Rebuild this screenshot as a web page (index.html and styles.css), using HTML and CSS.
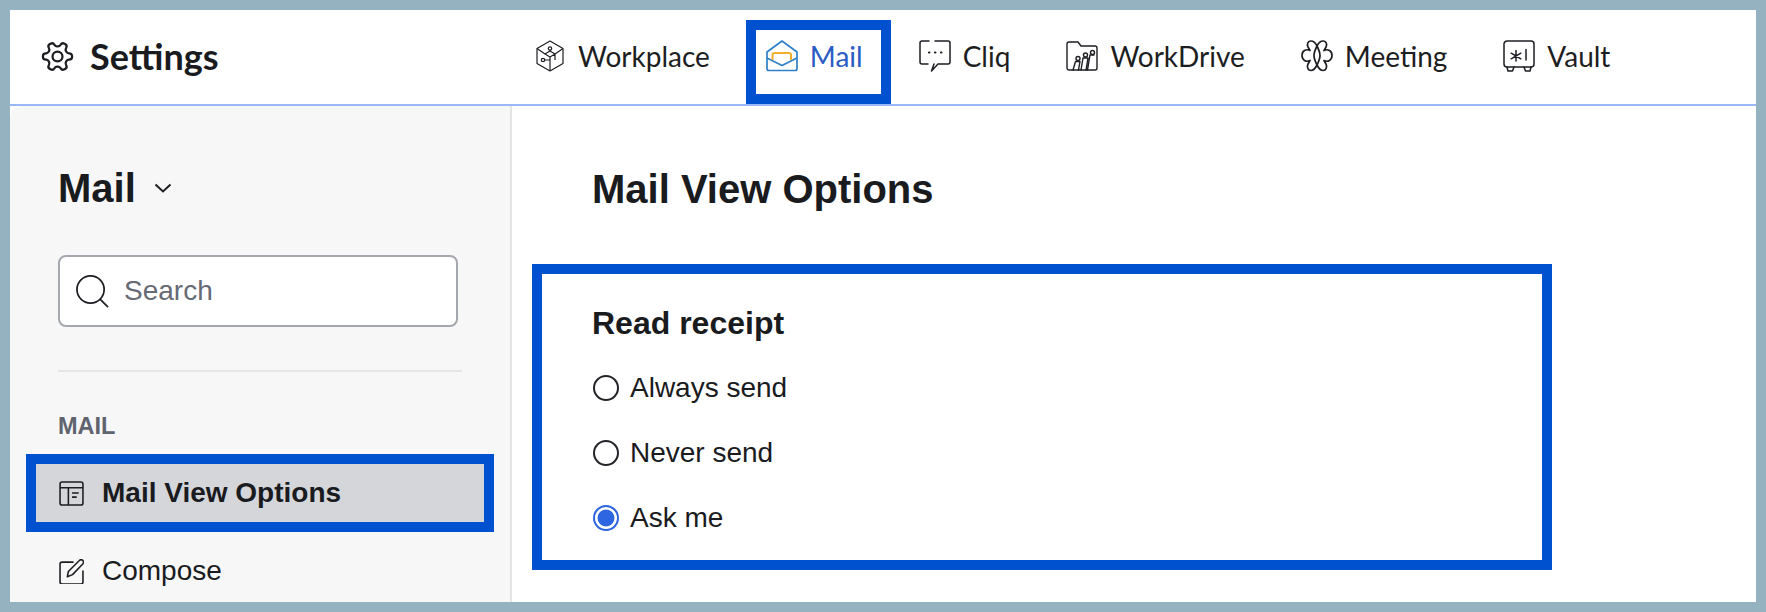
FILE: index.html
```html
<!DOCTYPE html>
<html lang="en">
<head>
<meta charset="utf-8">
<title>Mail View Options</title>
<link rel="stylesheet" href="styles.css">
</head>
<body>
<div class="frame">
  <header class="topbar">
    <div class="brand">
      <svg class="gear" viewBox="0 0 24 24" fill="none" stroke="#1d1e22" stroke-width="1.55" stroke-linejoin="round">
        <g transform="rotate(90 12 12)"><path d="M12.22 2h-.44a2 2 0 0 0-2 2v.18a2 2 0 0 1-1 1.73l-.43.25a2 2 0 0 1-2 0l-.15-.08a2 2 0 0 0-2.73.73l-.22.38a2 2 0 0 0 .73 2.73l.15.1a2 2 0 0 1 1 1.72v.51a2 2 0 0 1-1 1.74l-.15.09a2 2 0 0 0-.73 2.73l.22.38a2 2 0 0 0 2.73.73l.15-.08a2 2 0 0 1 2 0l.43.25a2 2 0 0 1 1 1.73V20a2 2 0 0 0 2 2h.44a2 2 0 0 0 2-2v-.18a2 2 0 0 1 1-1.73l.43-.25a2 2 0 0 1 2 0l.15.08a2 2 0 0 0 2.73-.73l.22-.39a2 2 0 0 0-.73-2.73l-.15-.08a2 2 0 0 1-1-1.74v-.5a2 2 0 0 1 1-1.74l.15-.09a2 2 0 0 0 .73-2.73l-.22-.38a2 2 0 0 0-2.73-.73l-.15.08a2 2 0 0 1-2 0l-.43-.25a2 2 0 0 1-1-1.73V4a2 2 0 0 0-2-2z"/><circle cx="12" cy="12" r="3.4"/></g>
      </svg>
      <span class="brand-name">Settings</span>
    </div>
    <nav class="apps">
      <a class="app">
        <svg class="app-icon workplace" viewBox="0 0 28 32" fill="none" stroke="#1d1e22" stroke-width="1.2" stroke-linejoin="round">
          <path d="M14 1 27 8.500V23.500L14 31 1 23.500V8.500Z"/>
          <path d="M1 8.500 9 14M27 8.500 19 14M14 11 19 14 14 17 9 14ZM19 14V20M14 17V31M14 10V11M8.500 20 14 20"/>
          <circle cx="14" cy="8.500" r="1.700"/>
          <circle cx="7" cy="20" r="1.700"/>
        </svg>
        <span>Workplace</span>
      </a>
      <a class="app active">
        <svg class="app-icon mail-icon" viewBox="0 0 32 32" fill="none" stroke-width="1.700" stroke-linejoin="round">
          <path d="M1 12 16 1 31 12V28.500A2 2 0 0 1 29 30.500H3A2 2 0 0 1 1 28.500Z" stroke="#2f80c8"/>
          <path d="M1 18 16 25.500 31 18" stroke="#2f80c8"/>
          <path d="M6.500 20V15A2 2 0 0 1 8.500 13H23A2 2 0 0 1 25 15V20" stroke="#f5ad2e" stroke-width="2"/>
        </svg>
        <span>Mail</span>
      </a>
      <a class="app">
        <svg class="app-icon" viewBox="0 0 32 32" fill="none" stroke="#1d1e22" stroke-width="1.500" stroke-linecap="round" stroke-linejoin="round">
          <path d="M10 1H3A2 2 0 0 0 1 3V22A2 2 0 0 0 3 24H9M15 24 12.500 31 19 24H29A2 2 0 0 0 31 22V3A2 2 0 0 0 29 1H16"/>
          <path d="M10 12.500h.4M16 12.500h.4M22 12.500h.4" stroke-width="2.200"/>
        </svg>
        <span>Cliq</span>
      </a>
      <a class="app">
        <svg class="app-icon" viewBox="0 0 32 32" fill="none" stroke="#1d1e22" stroke-width="1.400" stroke-linecap="round" stroke-linejoin="round">
          <path d="M1 4A2 2 0 0 1 3 2H12L15 6H29A2 2 0 0 1 31 8V28A2 2 0 0 1 29 30H3A2 2 0 0 1 1 28Z"/>
          <path d="M7 30 9.500 21.500H14L12.500 30M15 30 17 18H22L20 30M21.500 30 24 15H28"/>
          <circle cx="12" cy="18.500" r="2"/><circle cx="19.500" cy="15" r="2"/><circle cx="26.500" cy="12.500" r="2"/>
        </svg>
        <span>WorkDrive</span>
      </a>
      <a class="app">
        <svg class="app-icon" viewBox="0 0 32 32" fill="none" stroke="#1d1e22" stroke-width="1.700" stroke-linejoin="round">
          <path d="M16 6C14 2 12 1 10 1 7 1 5.500 4 7 7L9 10.500C5 8.500 1 11 1 15.500 1 20 5 22.500 9 20.500L7 24C5.500 27 7 30.500 10 30.500 12 30.500 14 29 16 25 18 29 20 30.500 22 30.500 25 30.500 26.500 27 25 24L23 20.500C27 22.500 31 20 31 15.500 31 11 27 8.500 23 10.500L25 7C26.500 4 25 1 22 1 20 1 18 2 16 6Z"/>
          <path d="M16 6C14 10 13 13 13 15.500 13 18 14 21 16 25 18 21 19 18 19 15.500 19 13 18 10 16 6Z"/>
        </svg>
        <span>Meeting</span>
      </a>
      <a class="app">
        <svg class="app-icon" viewBox="0 0 32 32" fill="none" stroke="#1d1e22" stroke-width="1.500" stroke-linecap="round" stroke-linejoin="round">
          <path d="M4 1H28A3 3 0 0 1 31 4V24A3 3 0 0 1 28 27H4A3 3 0 0 1 1 24V4A3 3 0 0 1 4 1Z"/>
          <path d="M4 27 5 31H9.500L11 27M28 27 27 31H22.500L21 27"/>
          <path d="M13 10.500V21M8.200 13.200 17.800 18.800M17.800 13.200 8.200 18.800M23 9.500V20" stroke-width="1.500"/>
        </svg>
        <span>Vault</span>
      </a>
    </nav>
  </header>
  <div class="body">
    <aside class="sidebar">
      <div class="module">
        <h2>Mail</h2>
        <svg class="chevron" viewBox="0 0 18 10" fill="none" stroke="#1d1e22" stroke-width="2"><path d="M1.500 1.500 9 8.500 16.500 1.500"/></svg>
      </div>
      <div class="search">
        <svg class="search-icon" viewBox="0 0 34 34" fill="none" stroke="#1d1e22" stroke-width="1.800"><circle cx="15" cy="15" r="14"/><path d="M25 25 33 33"/></svg>
        <span>Search</span>
      </div>
      <div class="divider"></div>
      <div class="section-label">MAIL</div>
      <a class="side-item selected">
        <svg class="side-icon" viewBox="0 0 24 24" fill="none" stroke="#1d1e22" stroke-width="1.500"><rect x="1" y="1" width="22" height="22" rx="2"/><path d="M1 6.500H23M9 6.500V23M12.500 11.500H19M12.500 15.500H17"/></svg>
        <span>Mail View Options</span>
      </a>
      <a class="side-item">
        <svg class="side-icon" viewBox="0 0 24 24" fill="none" stroke="#1d1e22" stroke-width="1.500" stroke-linejoin="round"><path d="M14 3H3A2 2 0 0 0 1 5V22A2 2 0 0 0 3 24H21A2 2 0 0 0 23 22V11"/><path d="M8 17 9 12 19.500 1.500A1.700 1.700 0 0 1 23 4.500L13 15Z"/></svg>
        <span>Compose</span>
      </a>
    </aside>
    <main class="content">
      <h1>Mail View Options</h1>
      <section class="panel">
        <h3>Read receipt</h3>
        <div class="option"><span class="radio"></span><span>Always send</span></div>
        <div class="option"><span class="radio"></span><span>Never send</span></div>
        <div class="option"><span class="radio checked"></span><span>Ask me</span></div>
      </section>
    </main>
  </div>
</div>
</body>
</html>
```

FILE: styles.css
```css
*, *::after { box-sizing: border-box; }
html, body { margin: 0; padding: 0; }
body { font-family: "Liberation Sans", Arial, sans-serif; color: #1a1b1e; background: #fff; }

.frame {
  width: 1766px;
  height: 612px;
  border: 10px solid #95b2c0;
  overflow: hidden;
  display: flex;
  flex-direction: column;
  background: #fff;
}

.topbar {
  height: 96px;
  flex: none;
  display: flex;
  align-items: center;
  border-bottom: 2px solid #9ab8f9;
  padding: 0 0 2px 32px;
  font-family: Lato, sans-serif;
}
.brand { display: flex; align-items: center; gap: 17px; width: 494px; }
.gear { width: 35px; height: 35px; margin: 0 -2px 0 -2px; }
.brand-name { font-size: 36px; font-weight: 700; color: #1a1b1e; }

.apps { display: flex; align-items: center; gap: 56px; }
.app { position: relative; display: flex; align-items: center; gap: 12px; height: 32px; font-size: 28px; color: #1d1e22; }
.app-icon { width: 32px; height: 32px; flex: none; }
.workplace { width: 28px; margin-right: 2px; }
.app.active { color: #2a5cc4; }
.app.active::after {
  content: "";
  position: absolute;
  left: -20px;
  right: -28px;
  top: -20px;
  height: 84px;
  border: 10px solid #0051d0;
}

.body { flex: 1; display: flex; min-height: 0; }
.sidebar {
  width: 502px;
  flex: none;
  background: #f7f7f7;
  border-right: 2px solid #e4e4e6;
  border-top-left-radius: 12px;
  padding-left: 16px;
}
.module { display: flex; align-items: center; margin: 62px 0 0 32px; height: 40px; gap: 18px; }
.module h2 { margin: 0; font-size: 40px; font-weight: 700; line-height: 40px; color: #1a1b1e; }
.chevron { width: 18px; height: 10px; }

.search {
  display: flex;
  align-items: center;
  gap: 15px;
  width: 400px;
  height: 72px;
  margin: 47px 0 0 32px;
  padding-left: 16px;
  background: #fff;
  border: 2px solid #a5a7ae;
  border-radius: 8px;
  font-size: 28px;
  color: #666a75;
}
.search-icon { width: 33px; height: 33px; }

.divider { width: 404px; height: 2px; margin: 43px 0 0 32px; background: #e6e6e8; }
.section-label { margin: 39px 0 0 32px; height: 30px; line-height: 30px; font-size: 23.500px; font-weight: 700; color: #60646f; }

.side-item {
  display: flex;
  align-items: center;
  gap: 18px;
  width: 468px;
  height: 78px;
  border: 10px solid transparent;
  padding-left: 23px;
  font-size: 28px;
  color: #1a1b1e;
}
.side-item.selected {
  margin-top: 13px;
  background: #d5d6da;
  background-clip: padding-box;
  border-color: #0051d0;
  font-weight: 700;
}
.side-icon { width: 25px; height: 25px; flex: none; }

.content { flex: 1; padding-left: 20px; }
.content h1 {
  margin: 62px 0 0 60px;
  font-size: 40px;
  line-height: 42px;
  font-weight: 700;
  color: #1a1b1e;
}
.panel {
  width: 1020px;
  height: 306px;
  margin-top: 54px;
  border: 10px solid #0051d0;
  padding: 32px 0 0 51px;
}
.panel h3 { margin: 0 0 31px -1px; font-size: 32px; line-height: 34px; font-weight: 700; color: #1a1b1e; }
.option { display: flex; align-items: center; gap: 11px; height: 34px; margin-bottom: 31px; font-size: 28px; color: #1a1b1e; }
.radio { width: 26px; height: 26px; flex: none; border: 2px solid #232428; border-radius: 50%; background: #fff; }
.radio.checked { border-color: #2d66e0; background: radial-gradient(circle, #2d66e0 0 8px, #fff 8.800px); }
```
